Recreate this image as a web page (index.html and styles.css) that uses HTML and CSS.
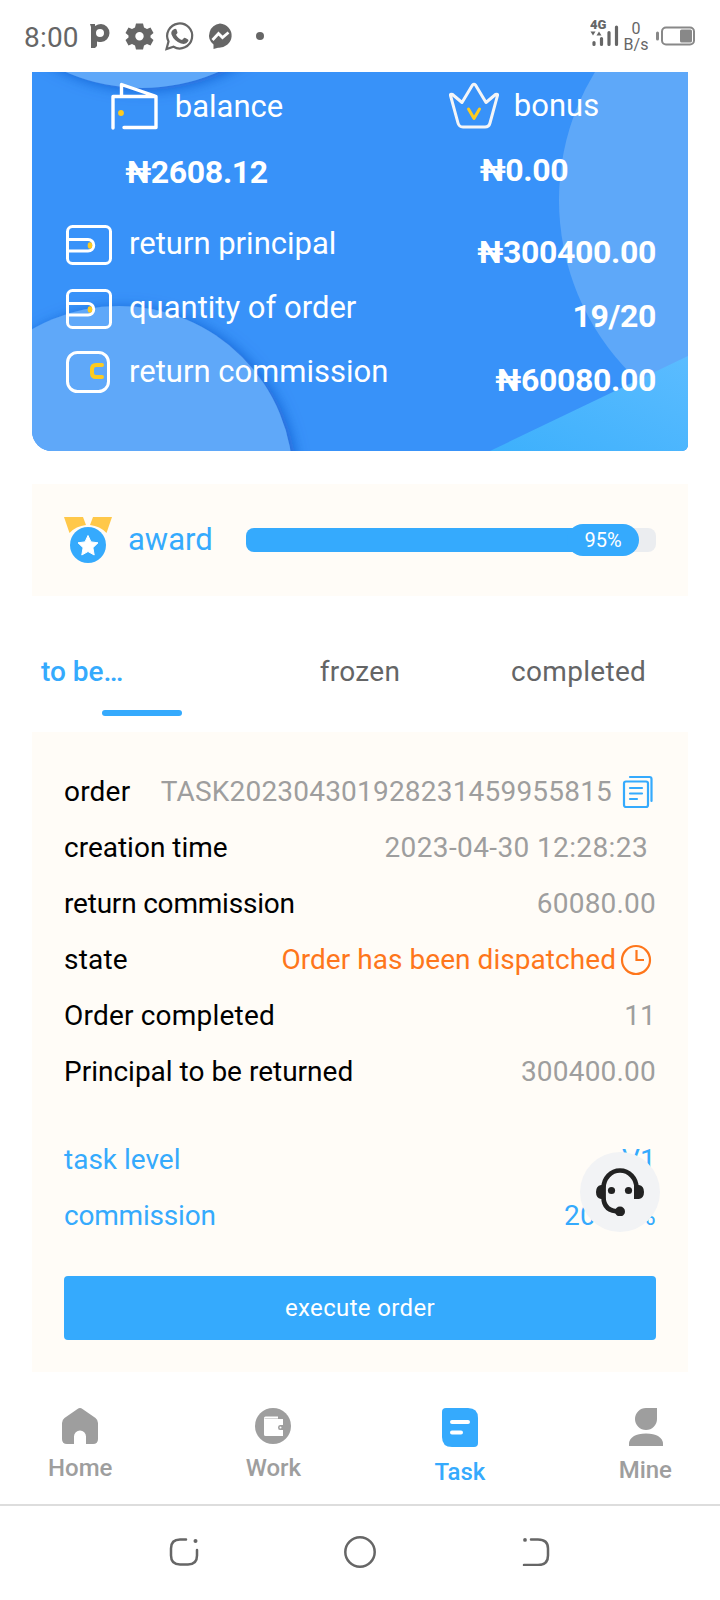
FILE: index.html
```html
<!DOCTYPE html>
<html lang="en">
<head>
<meta charset="UTF-8">
<title>Task</title>
<link rel="stylesheet" href="styles.css">
</head>
<body>
<div class="status">
<span class="time">8:00</span>
<svg class="status-icons" width="180" height="32" viewBox="0 0 180 32">
<path fill="#666" fill-rule="evenodd" d="M1 4h5v2q3-2 6-2a8.500 9 0 0 1 0 18q-2 0-4-.5V26l-2 2H2V7zM11 9a4 4 0 1 0 0 8a4 4 0 1 0 0-8z"/>
<path fill="#666" fill-rule="evenodd" d="M47 3.500h7l1 4 3 1.500 3.500-1.500 3 5.500-3 2.500v2l3 2.500-3 5.500-3.500-1.500-3 1.500-1 4h-7l-1-4-3-1.500-3.500 1.500-3-5.500 3-2.500v-2l-3-2.500 3-5.500L43 9l3-1.500zM50.500 12a4.200 4.200 0 1 0 0 8.400a4.200 4.200 0 1 0 0-8.400z"/>
<path fill="none" stroke="#666" stroke-width="2.200" d="M77.500 29l2-7.500a12.500 12.500 0 1 1 5 5.300z"/>
<path fill="#666" d="M84.500 9.500q2-1.500 3 0l1 3q0 1-1.500 2.300q2 4 6 5.200l2-2q1-.6 4 1.500q1 .5 0 2q-2 3.500-7 2q-7-2.500-9.500-9q-1-3 2-5z"/>
<path fill="#666" d="M131 3.500a12.500 12 0 1 1-2 24.200l-4.500 1.300v-4.500A12.500 12 0 0 1 131 3.500z"/>
<path fill="none" stroke="#fff" stroke-width="2.800" d="M123.500 20l6-6.500 4 4 6-5"/>
<circle cx="171" cy="16" r="4" fill="#666"/>
</svg>
<svg class="signal" width="30" height="32" viewBox="0 -4 30 32">
<text x="0" y="9" class="net">4G</text>
<path fill="#666" d="M.5 11.500h5l-2.500 4zM6.500 15.500h5l-2.500-4z"/>
<path stroke="#666" stroke-width="3.200" stroke-linecap="round" d="M4 22.500v2M11.500 18.500v6M19 12.500v12M26.500 7v17.500"/>
</svg>
<span class="speed">0<br>B/s</span>
<svg class="battery" width="40" height="20" viewBox="0 0 40 20">
<rect x="0" y="5.500" width="3" height="9" rx="1.500" fill="#888"/>
<rect x="6" y="1.500" width="32" height="17" rx="4" fill="none" stroke="#888" stroke-width="2"/>
<rect x="24" y="3.500" width="12" height="13" rx="1.500" fill="#888"/>
</svg>
</div>

<div class="card">
<svg class="card-bg" width="656" height="379" viewBox="32 72 656 379">
<defs>
<linearGradient id="corner" x1="0" y1="1" x2="1" y2="0">
<stop offset="0" stop-color="#3db0fc"/>
<stop offset="1" stop-color="#5bbcff"/>
</linearGradient>
<filter id="shadow" x="-20%" y="-20%" width="140%" height="140%">
<feDropShadow dx="4" dy="2" stdDeviation="7" flood-color="#0c4fc4" flood-opacity=".7"/>
</filter>
</defs>
<rect x="32" y="72" width="656" height="379" fill="#3892f9"/>
<circle cx="142" cy="-102" r="190" fill="#5ea8f9" filter="url(#shadow)"/>
<circle cx="119" cy="480" r="174" fill="#5ea8f9" filter="url(#shadow)"/>
<circle cx="805" cy="200" r="246" fill="#5ea8f9"/>
<path fill="url(#corner)" d="M490 451L688 356v95z"/>
</svg>
<div class="totals">
<div class="total balance">
<div class="total-name">
<svg width="50" height="50" viewBox="0 0 50 50">
<path fill="none" stroke="#fff" stroke-width="3.400" stroke-linecap="round" stroke-linejoin="round" d="M3 46V14.500h43V45.500H14M11.500 13.500V2.500L45 14"/>
<circle cx="11" cy="31" r="2.900" fill="#fecb1f"/>
</svg>
<span>balance</span>
</div>
<b>₦2608.12</b>
</div>
<div class="total bonus">
<div class="total-name">
<svg width="50" height="50" viewBox="0 0 50 50">
<path fill="none" stroke="#f4f5f7" stroke-width="3" stroke-linejoin="round" d="M1.500 13.500Q1 11.500 3.500 12.500L13 20.500L23.500 3Q25 1.500 26.500 3L37 20.500L46.500 12.500Q49 11.500 48.500 13.500L41 41Q40 45 36 45H14Q10 45 9 41z"/>
<path fill="none" stroke="#fecb1f" stroke-width="3" stroke-linecap="round" stroke-linejoin="round" d="M19.500 27l5.500 9.500 5.500-9.500"/>
</svg>
<span>bonus</span>
</div>
<b>₦0.00</b>
</div>
</div>
<div class="line">
<svg width="48" height="44" viewBox="0 0 48 44">
<rect x="3.500" y="4.500" width="43" height="37" rx="5" fill="none" stroke="#fff" stroke-width="3"/>
<path d="M4 17.500h20a5.700 5.700 0 0 1 0 11.500H4" fill="none" stroke="#fff" stroke-width="3"/>
<ellipse cx="26" cy="23.500" rx="2.300" ry="3.200" fill="#fecb1f"/>
</svg>
<span>return principal</span>
<b>₦300400.00</b>
</div>
<div class="line">
<svg width="48" height="44" viewBox="0 0 48 44">
<rect x="3.500" y="4.500" width="43" height="37" rx="5" fill="none" stroke="#fff" stroke-width="3"/>
<path d="M4 17.500h20a5.700 5.700 0 0 1 0 11.500H4" fill="none" stroke="#fff" stroke-width="3"/>
<ellipse cx="26" cy="23.500" rx="2.300" ry="3.200" fill="#fecb1f"/>
</svg>
<span>quantity of order</span>
<b>19/20</b>
</div>
<div class="line">
<svg width="48" height="44" viewBox="0 0 48 44">
<rect x="3.500" y="2.500" width="41" height="39" rx="10" fill="none" stroke="#fff" stroke-width="3"/>
<path d="M38 15h-6q-4 0-4 4v4q0 4 4 4h6" fill="none" stroke="#fecb1f" stroke-width="4" stroke-linecap="round"/>
</svg>
<span>return commission</span>
<b>₦60080.00</b>
</div>
</div>

<div class="award">
<svg width="48" height="48" viewBox="0 0 48 48">
<path fill="#ffc84a" d="M0 1h19l3 8Q12 10 5.500 17zM29 1h19l-5.500 16Q36 10 26 9z"/>
<circle cx="24" cy="29" r="18" fill="#35aafd"/>
<path fill="#fff" stroke="#fff" stroke-linejoin="round" d="M24 19.500l3 6.400 7 .9-5.100 4.900 1.300 7.300-6.200-3.500-6.200 3.500 1.300-7.300-5.100-4.900 7-.9z"/>
</svg>
<span class="award-name">award</span>
<div class="track">
<div class="bar" style="width:95%"></div>
<span class="percent">95%</span>
</div>
</div>

<div class="tabs">
<div class="tab active">to be…</div>
<div class="tab">frozen</div>
<div class="tab">completed</div>
</div>

<div class="order">
<div class="row">
<span class="loose">order</span>
<span class="value">TASK202304301928231459955815<svg class="copy" width="32" height="34" viewBox="0 0 32 34">
<path fill="none" stroke="#35aafd" stroke-width="2.200" stroke-linecap="round" d="M8 2h19.500q2 0 2 2v22"/>
<rect x="2" y="6.500" width="24" height="25.500" rx="2" fill="none" stroke="#35aafd" stroke-width="2.200"/>
<path stroke="#35aafd" stroke-width="2.200" stroke-linecap="round" d="M8 13h12M8 18.500h12M8 24h7"/>
</svg></span>
</div>
<div class="row">
<span>creation time</span>
<span class="value created">2023-04-30 12:28:23</span>
</div>
<div class="row">
<span class="tight">return commission</span>
<span class="value">60080.00</span>
</div>
<div class="row">
<span class="loose">state</span>
<span class="value state">Order has been dispatched<svg class="clock" width="32" height="32" viewBox="0 0 32 32">
<circle cx="16" cy="16" r="14" fill="none" stroke="#fe761b" stroke-width="2.200"/>
<path fill="none" stroke="#fe761b" stroke-width="2.200" d="M16.500 6v10H24"/>
</svg></span>
</div>
<div class="row">
<span class="loose">Order completed</span>
<span class="value">11</span>
</div>
<div class="row">
<span>Principal to be returned</span>
<span class="value">300400.00</span>
</div>
<div class="row blue first">
<span>task level</span>
<span class="value">V1</span>
</div>
<div class="row blue">
<span class="tight">commission</span>
<span class="value">20.00%</span>
</div>
<button class="execute">execute order</button>
</div>

<div class="menu">
<a class="item">
<svg width="36" height="36" viewBox="0 0 36 36">
<path fill="#9e9e9e" d="M15.500 1q2.500-1.800 5 0l13 9q2.500 2 2.500 5v16q0 5-5 5h-7v-7.500a6 6 0 0 0-12 0V36H5q-5 0-5-5V15q0-3 2.500-5z"/>
</svg>
<span>Home</span>
</a>
<a class="item">
<svg width="36" height="36" viewBox="0 0 36 36">
<circle cx="18" cy="18" r="18" fill="#9e9e9e"/>
<path fill="#fff" d="M9 10q0-1.500 1.500-1.500H23V11h5v6h-3q-2 0-2 2.500t2 2.500h3v6H10.500Q9 28 9 26.500z"/>
<path stroke="#ccc" stroke-width=".8" d="M9.500 10.500H23"/>
<circle cx="25.500" cy="19.500" r="1" fill="#fff"/>
</svg>
<span>Work</span>
</a>
<a class="item active">
<svg width="36" height="40" viewBox="0 0 36 40">
<path fill="#35aafd" d="M4 0h22q10 0 10 10v25q0 4-4 4H10Q0 39 0 29V4q0-4 4-4z"/>
<path stroke="#fff" stroke-width="4" stroke-linecap="round" d="M10 14h16M10 24.500h9"/>
</svg>
<span>Task</span>
</a>
<a class="item">
<svg width="36" height="38" viewBox="0 0 36 38">
<path fill="#9e9e9e" d="M19 0h11v11a11 11 0 1 1-11-11zM2 38v-2q0-5 5-8 4-2.500 12-2.500T31 28q5 3 5 8v2z"/>
</svg>
<span>Mine</span>
</a>
</div>

<div class="keys">
<svg width="30" height="28" viewBox="0 0 30 28">
<path fill="none" stroke="#666" stroke-width="2.500" stroke-linecap="round" d="M17 1.500h-6q-9 0-9 9v7q0 9 9 9h8q9 0 9-9V12"/>
<circle cx="26.500" cy="3" r="2" fill="#666"/>
</svg>
<svg width="32" height="32" viewBox="0 0 32 32">
<circle cx="16" cy="16" r="14.700" fill="none" stroke="#666" stroke-width="2.500"/>
</svg>
<svg width="30" height="28" viewBox="0 0 30 28">
<path fill="none" stroke="#666" stroke-width="2.500" stroke-linecap="round" d="M10 1.500h7q10 0 10 9v7q0 9.500-10 9.500H3"/>
<circle cx="4" cy="1.900" r="1.900" fill="#666"/>
</svg>
</div>

<div class="service">
<svg width="48" height="48" viewBox="0 0 48 48">
<path fill="none" stroke="#222" stroke-width="4.600" d="M40.500 20a16.500 17.500 0 0 0-33 0v9q0 14.500 16.500 14.500"/>
<path fill="#222" d="M9.500 17H5q-5 1-5 7t5 7h4.500zM38 17h5q5 1 5 7t-5 7h-5z"/>
<circle cx="24" cy="43.500" r="5" fill="#222"/>
<circle cx="15.500" cy="22.500" r="3.600" fill="#222"/>
<circle cx="32.500" cy="22.500" r="3.600" fill="#222"/>
</svg>
</div>
</body>
</html>
```
FILE: styles.css
```css
*{
margin:0;
padding:0;
box-sizing:border-box;
}
body{
width:720px;
height:1600px;
position:relative;
overflow:hidden;
background:#fff;
font-family:Roboto,"Liberation Sans",sans-serif;
font-size:28px;
}
svg{
display:block;
flex:none;
}
.status{
display:flex;
align-items:center;
height:72px;
padding:0 24px;
color:#666;
}
.time{
width:65px;
font-size:28px;
line-height:32px;
padding-top:3px;
letter-spacing:.2px;
}
.signal{
margin-left:auto;
margin-top:-8px;
}
.net{
font-size:13px;
font-weight:900;
fill:#666;
}
.speed{
width:26px;
margin:1px 7px 0 3px;
font-size:16px;
line-height:16px;
text-align:center;
}
.card{
position:relative;
height:379px;
margin:0 32px;
border-radius:0 0 6px 20px;
overflow:hidden;
color:#fff;
font-size:31px;
}
.card-bg{
position:absolute;
left:0;
top:0;
z-index:-1;
}
.card b{
font-size:32px;
letter-spacing:-.35px;
}
.totals{
display:flex;
height:140px;
}
.total{
width:328px;
padding-top:10px;
text-align:center;
}
.total-name{
display:flex;
justify-content:center;
gap:15px;
height:62px;
line-height:50px;
}
.total b{
display:block;
line-height:56px;
}
.balance{
padding-left:1px;
}
.bonus span{
margin-top:-1px;
}
.bonus b{
margin-top:-2px;
}
.line{
display:flex;
align-items:center;
height:64px;
padding:0 32px;
}
.line span{
margin-left:17px;
line-height:62px;
}
.line b{
margin-left:auto;
padding-top:15px;
}
.award{
display:flex;
align-items:center;
height:112px;
margin:33px 32px 0;
padding:0 32px;
background:#fffcf7;
}
.award-name{
width:118px;
margin:-2px 0 0 16px;
color:#35aafd;
font-size:31px;
}
.track{
position:relative;
width:410px;
height:24px;
border-radius:8px;
background:#ebedf0;
}
.bar{
height:24px;
border-radius:8px;
background:#35aafd;
}
.percent{
position:absolute;
right:17px;
top:-4px;
width:72px;
height:32px;
border-radius:16px;
background:#35aafd;
color:#fff;
font-size:20px;
line-height:32px;
text-align:center;
}
.tabs{
display:flex;
height:88px;
margin:32px 32px 16px;
color:#646566;
}
.tab{
width:33.333%;
line-height:88px;
text-align:center;
letter-spacing:.3px;
position:relative;
}
.tab.active{
padding-left:9px;
text-align:left;
font-weight:500;
letter-spacing:0;
color:#35aafd;
}
.tab.active::after{
content:"";
position:absolute;
left:70px;
bottom:0;
width:80px;
height:6px;
border-radius:3px;
background:#35aafd;
}
.order{
height:640px;
margin:0 32px;
padding:32px;
background:#fffcf7;
}
.row{
display:flex;
justify-content:space-between;
height:56px;
line-height:56px;
white-space:nowrap;
}
.tight{
letter-spacing:-.2px;
}
.loose{
letter-spacing:.2px;
}
.value{
display:flex;
align-items:center;
color:#9e9e9e;
letter-spacing:.2px;
}
.copy{
margin:0 2px 0 10px;
}
.created{
padding-right:8px;
letter-spacing:.38px;
}
.state{
color:#fe761b;
letter-spacing:.05px;
}
.clock{
margin:0 4px 0 4px;
}
.first{
margin-top:32px;
}
.blue,.blue .value{
color:#35aafd;
}
.execute{
display:block;
width:100%;
height:64px;
margin-top:32px;
border:0;
border-radius:4px;
background:#35aafd;
color:#fff;
font:24px Roboto,sans-serif;
letter-spacing:.35px;
}
.menu{
display:flex;
justify-content:space-between;
height:134px;
padding:36px 48px 0;
border-bottom:2px solid #ddd;
}
.item{
display:flex;
flex-direction:column;
align-items:center;
color:#9e9e9e;
font-size:24px;
font-weight:500;
line-height:28px;
}
.item span{
margin-top:10px;
}
.item.active{
color:#35aafd;
}
.keys{
display:flex;
align-items:center;
justify-content:space-between;
height:92px;
padding:0 169px;
}
.service{
position:absolute;
left:580px;
top:1152px;
width:80px;
height:80px;
padding:16px;
border-radius:50%;
background:#f2f3f5;
}
```
